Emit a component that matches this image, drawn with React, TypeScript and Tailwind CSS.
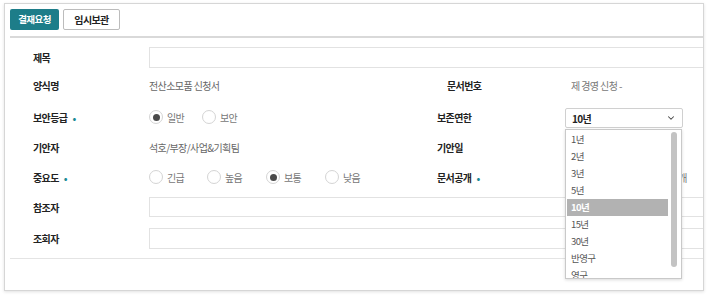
import { ChevronDown } from "lucide-react"

const retention = ["1년", "2년", "3년", "5년", "10년", "15년", "30년", "반영구", "영구"]

function Radio({ label, checked, width }: { label: string; checked?: boolean; width: string }) {
  return (
    <label className={`flex items-center gap-[4px] ${width}`}>
      <span className="w-[14px] h-[14px] rounded-full border border-[#d4d4d4] bg-white flex items-center justify-center">
        {checked && <span className="w-[7px] h-[7px] rounded-full bg-[#4a4a4a]" />}
      </span>
      <span className="text-[#777]">{label}</span>
    </label>
  )
}

function Label({ children, required, right, indent }: { children: string; required?: boolean; right?: boolean; indent?: boolean }) {
  return (
    <div className={`${right ? "w-[128px]" : "w-[144px] pl-[28px]"} ${indent ? "pl-[10px]" : ""} shrink-0 font-bold text-[#222]`}>
      {children}
      {required && <span className="ml-[5px] text-[#1b8a96]">•</span>}
    </div>
  )
}

function TextInput({ h }: { h: string }) {
  return <div className={`flex-1 ${h} border border-r-0 border-[#e2e2e2] bg-white`} />
}

export default function App() {
  return (
    <div className="w-[708px] h-[296px] bg-white pt-[3px] pl-[4px] font-['Noto_Sans_CJK_KR','Noto_Sans',sans-serif] text-[10px] tracking-[-0.6px]">
      <div className="relative w-[700px] h-[288px] border border-[#d6d6d6] shadow-[0_1px_3px_rgba(0,0,0,0.12)]">
        {/* 버튼 */}
        <div className="flex gap-[4px] pl-[5px] pt-[5px]">
          <button className="w-[49px] h-[21px] rounded-[2px] bg-[#1d7d89] text-white font-bold text-[9.5px]">
            결재요청
          </button>
          <button className="w-[57px] h-[21px] rounded-[2px] border border-[#bcbcbc] bg-white text-[#222] font-bold">
            임시보관
          </button>
        </div>
        <div className="mt-[6px] ml-[5px] h-[2px] bg-[#d9d9d9]" />

        {/* 폼 */}
        <div className="pt-[4px]">
          <div className="flex items-center h-[30px]">
            <Label>제목</Label>
            <TextInput h="h-[21px]" />
          </div>

          <div className="flex items-center h-[27px]">
            <Label>양식명</Label>
            <div className="w-[288px] text-[#666]">전산소모품 신청서</div>
            <Label right indent>문서번호</Label>
            <div className="pl-[6px] text-[#777]">제 경영 신청 -</div>
          </div>

          <div className="flex items-center h-[36px]">
            <Label required>보안등급</Label>
            <div className="w-[288px] flex">
              <Radio label="일반" checked width="w-[53px]" />
              <Radio label="보안" width="w-[53px]" />
            </div>
            <Label right>보존연한</Label>
            <div className="relative mt-[2px]">
              <div className="w-[118px] h-[20px] rounded-[2px] border border-[#d0d0d0] bg-white flex items-center justify-between pl-[6px] pr-[6px]">
                <span className="font-bold text-[#222]">10년</span>
                <ChevronDown size={10} strokeWidth={2.5} className="text-[#444]" />
              </div>
              {/* 드롭다운 목록 */}
              <div className="absolute z-10 left-0 top-[21px] w-[117px] h-[150px] border border-[#c9c9c9] bg-white shadow-[0_1px_3px_rgba(0,0,0,0.15)] overflow-hidden">
                <div className="w-[101px] ml-[1px] pt-[1px]">
                  {retention.map((item) => (
                    <div
                      key={item}
                      className={`h-[17px] flex items-center pl-[4px] text-[9.5px] ${
                        item === "10년" ? "bg-[#b2b2b2] text-white font-bold" : "text-[#555]"
                      }`}
                    >
                      {item}
                    </div>
                  ))}
                </div>
                <div className="absolute left-[105px] top-[2px] w-[6px] h-[135px] rounded-full bg-[#c3c3c3]" />
              </div>
            </div>
          </div>

          <div className="flex items-center h-[24px]">
            <Label>기안자</Label>
            <div className="w-[288px] text-[#666]">석호/부장/사업&amp;기획팀</div>
            <Label right>기안일</Label>
          </div>

          <div className="flex items-center h-[36px]">
            <Label required>중요도</Label>
            <div className="w-[288px] flex">
              <Radio label="긴급" width="w-[58px]" />
              <Radio label="높음" width="w-[59px]" />
              <Radio label="보통" checked width="w-[59px]" />
              <Radio label="낮음" width="w-[59px]" />
            </div>
            <Label right required>문서공개</Label>
            <div className="flex">
              <Radio label="공개" width="w-[78px]" />
              <Radio label="비공개" width="w-[50px]" />
            </div>
          </div>

          <div className="flex items-center h-[24px]">
            <Label>참조자</Label>
            <TextInput h="h-[20px]" />
          </div>

          <div className="flex items-center h-[38px]">
            <Label>조회자</Label>
            <TextInput h="h-[21px]" />
          </div>
        </div>
        <div className="mt-[1px] ml-[5px] h-px bg-[#e4e4e4]" />
      </div>
    </div>
  )
}
